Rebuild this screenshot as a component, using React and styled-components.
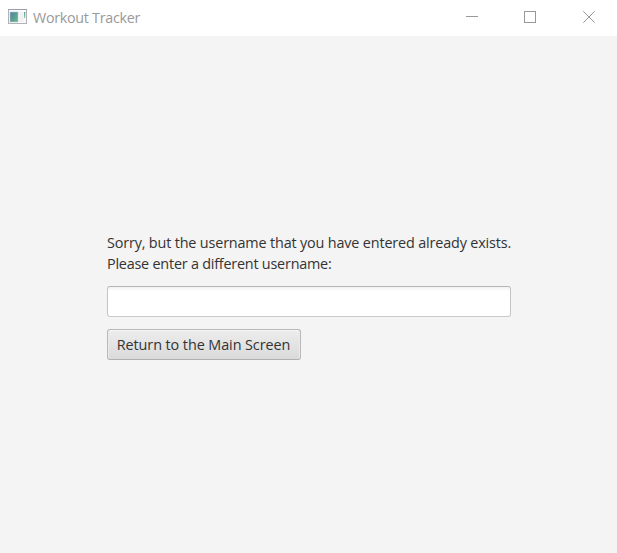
import React from 'react';
import styled, { createGlobalStyle } from 'styled-components';

const Global = createGlobalStyle`
  * { box-sizing: border-box; }
  body { margin: 0; background: #f4f4f4; font-family: "Open Sans", "Noto Sans", sans-serif; overflow: hidden; }
`;

const Window = styled.div`
  height: 100vh;
  display: flex;
  flex-direction: column;
  background: #f4f4f4;
`;

const TitleBar = styled.header`
  height: 36px;
  flex: none;
  display: flex;
  align-items: center;
  padding-left: 8px;
  background: #fff;
  color: #999;
`;

const AppIcon = styled.svg`
  display: block;
  flex: none;
  margin-bottom: 3px;
`;

const Title = styled.h1`
  flex: 1;
  margin: 0 0 0 5px;
  font-size: 14.3px;
  font-weight: 400;
  line-height: 20px;
  letter-spacing: -0.28px;
  white-space: nowrap;
`;

const Control = styled.button`
  width: 58px;
  height: 36px;
  display: flex;
  align-items: center;
  justify-content: center;
  padding: 0 0 2px ${(p) => p.$inset || 0}px;
  border: 0;
  background: transparent;
  color: #999;
`;

const Glyph = styled.svg`
  display: block;
  fill: none;
  stroke: currentColor;
`;

const Content = styled.main`
  flex: 1;
  display: flex;
  flex-direction: column;
  align-items: flex-start;
  gap: 12px;
  padding: 196px 0 0 107px;
`;

const Message = styled.div`
  font-size: 14.4px;
  line-height: 21px;
  white-space: nowrap;
  color: #333;
`;

const Line = styled.p`
  margin: 0;
  letter-spacing: ${(p) => p.$tracking}px;
`;

const Field = styled.input`
  display: block;
  width: 404px;
  height: 31px;
  padding: 0 9px;
  border: 1px solid #c4c4c4;
  border-top-color: #b6b6b6;
  border-bottom-color: #cacaca;
  border-radius: 3px;
  background: linear-gradient(#f0f0f0, #fff 4px);
  outline: none;
`;

const Button = styled.button`
  width: 194px;
  height: 31px;
  padding: 0 1px 0 0;
  border: 1px solid #b8b8b8;
  border-bottom-color: #b0b0b0;
  border-radius: 3px;
  background: linear-gradient(#ededed, #dadada);
  box-shadow: inset 0 1px #f6f6f6, inset 1px 0 #ebebeb, inset -1px 0 #ebebeb;
  font: 14.4px "Open Sans", "Noto Sans", sans-serif;
  letter-spacing: -0.08px;
  color: #333;
  white-space: nowrap;
`;

export default function App() {
  return (
    <Window>
      <Global />
      <TitleBar>
        <AppIcon width="20" height="17" viewBox="0 0 20 17">
          <defs>
            <linearGradient id="pane" x1="0" y1="0" x2="1" y2="1">
              <stop offset="0" stopColor="#4d80a4" />
              <stop offset="1" stopColor="#6bb883" />
            </linearGradient>
            <linearGradient id="bar" x1="0" y1="0" x2="0" y2="1">
              <stop offset="0" stopColor="#5c98a0" />
              <stop offset="1" stopColor="#8fcfa0" />
            </linearGradient>
          </defs>
          <rect x=".5" y="1.5" width="18" height="14" fill="#fbfbfb" stroke="#b1b3b8" />
          <path d="M0 1.5h19" stroke="#999ea8" />
          <rect x="2" y="4" width="8" height="10" fill="url(#pane)" stroke="#b5cdd0" strokeWidth=".6" />
          <rect x="11.5" y="4" width="4" height="10" fill="#f0f0f2" />
          <rect x="16" y="4" width="1.3" height="6" fill="url(#bar)" />
        </AppIcon>
        <Title>Workout Tracker</Title>
        <Control aria-label="Minimize">
          <Glyph width="12" height="12"><path d="M0 5.5h12" /></Glyph>
        </Control>
        <Control aria-label="Maximize">
          <Glyph width="12" height="12"><rect x=".5" y=".5" width="11" height="11" /></Glyph>
        </Control>
        <Control aria-label="Close" $inset={2}>
          <Glyph width="12" height="12"><path d="M.3.3l11.4 11.4M11.7.3L.3 11.7" /></Glyph>
        </Control>
      </TitleBar>
      <Content>
        <Message>
          <Line $tracking={-0.16}>Sorry, but the username that you have entered already exists.</Line>
          <Line $tracking={-0.22}>Please enter a different username:</Line>
        </Message>
        <Field aria-label="Username" />
        <Button>Return to the Main Screen</Button>
      </Content>
    </Window>
  );
}
